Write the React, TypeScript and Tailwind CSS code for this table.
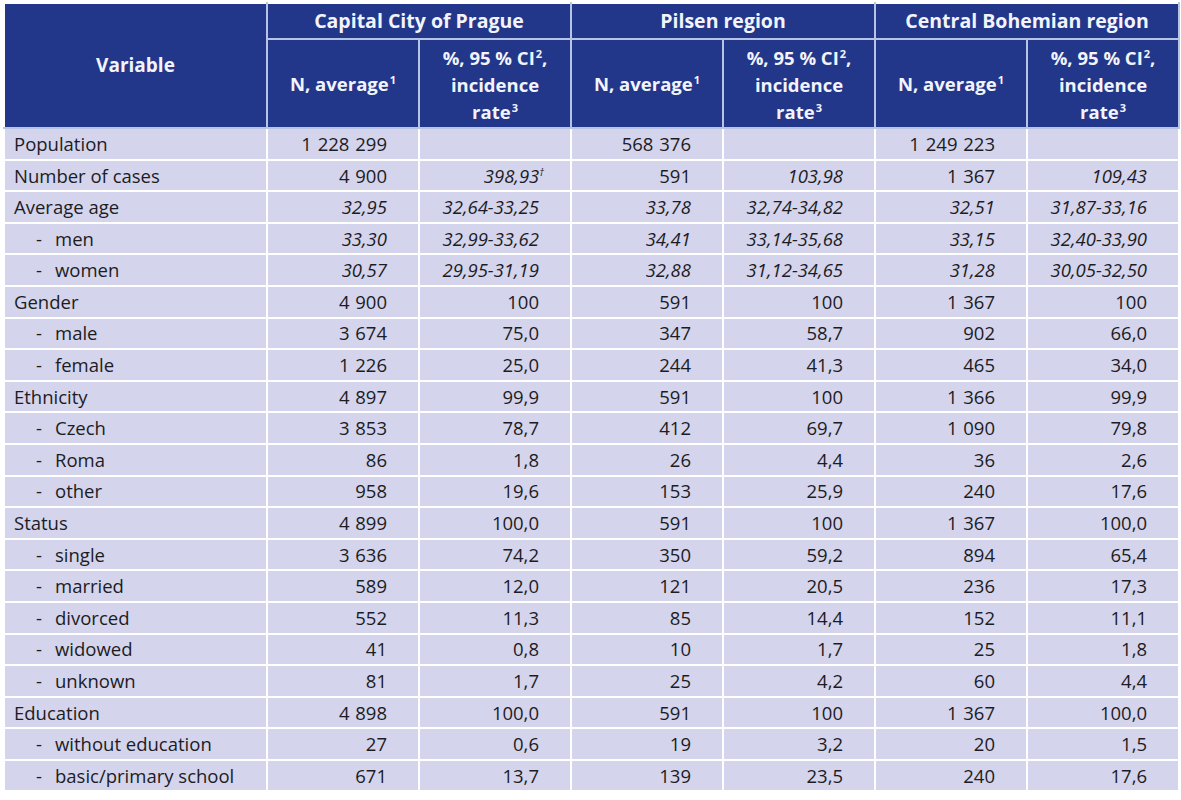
const rows: Row[] = [
  { label: 'Population', vals: ['1 228 299', '', '568 376', '', '1 249 223', ''] },
  { label: 'Number of cases', italicPct: true, vals: ['4 900', '398,93', '591', '103,98', '1 367', '109,43'] },
  { label: 'Average age', italic: true, vals: ['32,95', '32,64-33,25', '33,78', '32,74-34,82', '32,51', '31,87-33,16'] },
  { label: 'men', sub: true, italic: true, vals: ['33,30', '32,99-33,62', '34,41', '33,14-35,68', '33,15', '32,40-33,90'] },
  { label: 'women', sub: true, italic: true, vals: ['30,57', '29,95-31,19', '32,88', '31,12-34,65', '31,28', '30,05-32,50'] },
  { label: 'Gender', vals: ['4 900', '100', '591', '100', '1 367', '100'] },
  { label: 'male', sub: true, vals: ['3 674', '75,0', '347', '58,7', '902', '66,0'] },
  { label: 'female', sub: true, vals: ['1 226', '25,0', '244', '41,3', '465', '34,0'] },
  { label: 'Ethnicity', vals: ['4 897', '99,9', '591', '100', '1 366', '99,9'] },
  { label: 'Czech', sub: true, vals: ['3 853', '78,7', '412', '69,7', '1 090', '79,8'] },
  { label: 'Roma', sub: true, vals: ['86', '1,8', '26', '4,4', '36', '2,6'] },
  { label: 'other', sub: true, vals: ['958', '19,6', '153', '25,9', '240', '17,6'] },
  { label: 'Status', vals: ['4 899', '100,0', '591', '100', '1 367', '100,0'] },
  { label: 'single', sub: true, vals: ['3 636', '74,2', '350', '59,2', '894', '65,4'] },
  { label: 'married', sub: true, vals: ['589', '12,0', '121', '20,5', '236', '17,3'] },
  { label: 'divorced', sub: true, vals: ['552', '11,3', '85', '14,4', '152', '11,1'] },
  { label: 'widowed', sub: true, vals: ['41', '0,8', '10', '1,7', '25', '1,8'] },
  { label: 'unknown', sub: true, vals: ['81', '1,7', '25', '4,2', '60', '4,4'] },
  { label: 'Education', vals: ['4 898', '100,0', '591', '100', '1 367', '100,0'] },
  { label: 'without education', sub: true, vals: ['27', '0,6', '19', '3,2', '20', '1,5'] },
  { label: 'basic/primary school', sub: true, vals: ['671', '13,7', '139', '23,5', '240', '17,6'] },
];

type Row = {
  label: string;
  sub?: boolean;
  italic?: boolean;
  italicPct?: boolean;
  vals: string[];
};

const regions = ['Capital City of Prague', 'Pilsen region', 'Central Bohemian region'];

// header cells: navy fill, pale blue grid lines
const hd = 'border-2 border-[#b7c4e4] bg-[#22378a] text-[#f3f4fb] font-bold text-center align-middle';
const sup = 'text-[11px] leading-none relative top-[-7px] ml-[1px]';

function NHead() {
  return (
    <th className={`${hd} text-[18.5px] leading-[27px]`}>
      N, average<span className={sup}>1</span>
    </th>
  );
}

function PctHead() {
  return (
    <th className={`${hd} text-[18.5px] leading-[27px] pt-[2px]`}>
      %, 95 % CI<span className={sup}>2</span>,
      <br />
      incidence
      <br />
      rate<span className={sup}>3</span>
    </th>
  );
}

export default function App() {
  return (
    <div className="min-h-screen bg-white pl-[3px] pt-[2px]" style={{ fontFamily: "'Open Sans', 'Noto Sans', sans-serif" }}>
      <table className="border-collapse text-[18.5px] text-[#1c1c24] table-fixed w-[1177px]">
        <colgroup>
          <col className="w-[263px]" />
          {[0, 1, 2, 3, 4, 5].map((i) => (
            <col key={i} className="w-[152px]" />
          ))}
        </colgroup>
        <thead>
          <tr className="h-[36px]">
            <th rowSpan={2} className={`${hd} text-[19px] border-l-white border-t-white`}>
              Variable
            </th>
            {regions.map((r) => (
              <th key={r} colSpan={2} className={`${hd} text-[19.5px] border-t-white`}>
                {r}
              </th>
            ))}
          </tr>
          <tr className="h-[89px]">
            <NHead />
            <PctHead />
            <NHead />
            <PctHead />
            <NHead />
            <PctHead />
          </tr>
        </thead>
        <tbody>
          {rows.map((row) => (
            <tr key={row.label} className="h-[31.6px]">
              <td className="border-2 border-white bg-[#d4d4ec] pl-[9px] whitespace-nowrap">
                {row.sub ? (
                  <span className="flex">
                    <span className="w-[22px] pl-[22px] box-content">-</span>
                    <span className="ml-[-3px]">{row.label}</span>
                  </span>
                ) : (
                  row.label
                )}
              </td>
              {row.vals.map((v, i) => {
                const it = row.italic || (row.italicPct && i % 2 === 1);
                return (
                  <td
                    key={i}
                    className={`border-2 border-white bg-[#d4d4ec] text-right pr-[31px] whitespace-nowrap [word-spacing:1px] ${it ? 'italic' : ''}`}
                  >
                    {v}
                    {row.label === 'Number of cases' && i === 1 && (
                      <span className="text-[10px] leading-none relative top-[-7px] mr-[-5px]">†</span>
                    )}
                  </td>
                );
              })}
            </tr>
          ))}
        </tbody>
      </table>
    </div>
  );
}
